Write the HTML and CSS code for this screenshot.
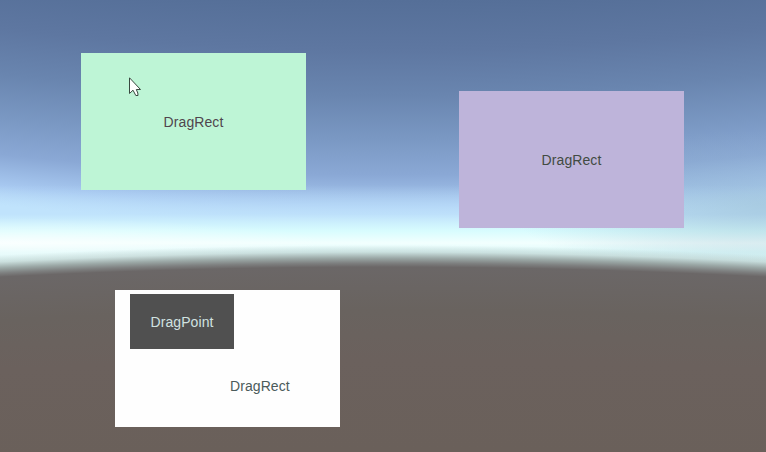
FILE: index.html
```html
<!DOCTYPE html>
<html lang="en">
<head>
<meta charset="utf-8">
<title>DragRect</title>
<link rel="stylesheet" href="styles.css">
</head>
<body>
<main class="scene">
  <div class="rect green"><span class="text">DragRect</span></div>
  <div class="rect purple"><span class="text">DragRect</span></div>
  <div class="rect white"><div class="point"><span class="text">DragPoint</span></div><span class="label text">DragRect</span></div>
  <svg class="cursor" width="13" height="20" viewBox="0 0 13 20"><path d="M.5.8V16.5L4 13.2L6.8 18.5H9L8.8 16L7.3 12.5H11.5Z" fill="#fff" stroke="#38483f"/></svg>
</main>
</body>
</html>
```
FILE: styles.css
```css
body { margin: 0; }
.scene {
  position: relative;
  width: 766px;
  height: 452px;
  overflow: hidden;
  font: 14px/16px "Liberation Sans", Arial, sans-serif;
  background:
    radial-gradient(circle at 383px 7600px, #6a605a 7150px, #6b615d 7240px, #69635f 7290px, #6b6767 7333px, #7e8080 7337px, rgba(147, 158, 156, .88) 7342px, rgba(190, 208, 206, .6) 7348px, rgba(225, 250, 250, 0) 7355px),
    radial-gradient(ellipse 260px 75px at 100% 205px, rgba(145, 180, 200, .5), rgba(145, 180, 200, 0)),
    radial-gradient(ellipse 330px 25px at 0 243px, rgba(255, 255, 255, .6), rgba(255, 255, 255, 0)),
    linear-gradient(to bottom, rgba(192, 227, 252, 0) 185px, rgba(192, 227, 252, .8) 214px, #d8fcfe 231px, #f2fffe 243px, #defafa 252px, #d5f0ef 270px),
    radial-gradient(circle at 383px -3400px, #556f98 3400px, #5e77a1 3450px, #6985af 3495px, #7a98c3 3539px, #8aa8d5 3575px, #a7c8f0 3606px, #c0e3fc 3626px);
}
.rect {
  position: absolute;
  width: 225px;
  height: 137px;
  display: flex;
  align-items: center;
  justify-content: center;
}
.text { letter-spacing: .08px; }
.green { left: 81px; top: 53px; background: #bef5d6; color: #50454d; }
.purple { left: 459px; top: 91px; background: #beb4da; color: #424b42; }
.white { left: 115px; top: 290px; background: #fefefe; color: #4b5b5b; }
.point {
  position: absolute;
  left: 15px;
  top: 4px;
  width: 104px;
  height: 55px;
  display: flex;
  align-items: center;
  justify-content: center;
  background: #505050;
  color: #d0e2e0;
}
.label { position: absolute; left: 115px; top: 88px; }
.cursor { position: absolute; left: 129px; top: 77px; }
```
